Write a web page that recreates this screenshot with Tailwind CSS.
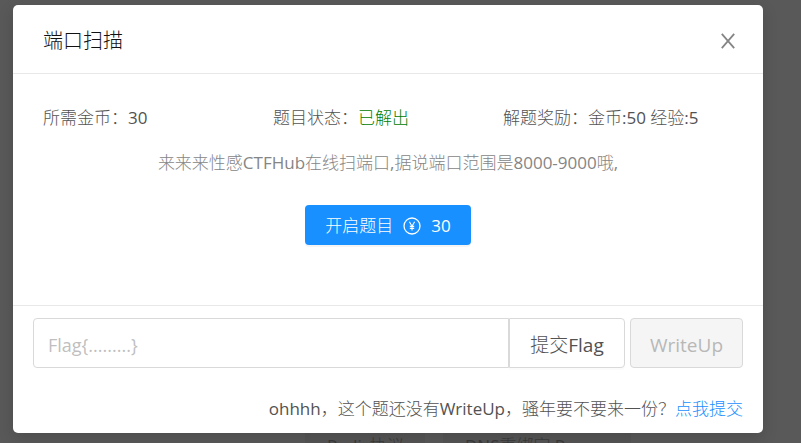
<!DOCTYPE html>
<html lang="zh-CN">
<head>
<meta charset="utf-8">
<meta name="viewport" content="width=device-width, initial-scale=1">
<title>端口扫描</title>
<script src="https://cdn.jsdelivr.net/npm/@tailwindcss/browser@4"></script>
</head>
<body class="relative min-h-screen overflow-hidden bg-[#595959] font-['Open_Sans','Noto_Sans_CJK_SC_Light','Noto_Sans_CJK_SC',sans-serif] text-[17px] leading-[26px] text-[#525252]">
  <!-- Page behind the dialog -->
  <div class="absolute inset-x-0 top-[425px] flex h-[18px] gap-[18px] overflow-hidden pl-[305px]" aria-hidden="true">
    <div class="h-[50px] w-[120px] shrink-0 bg-[#555555] px-[22px] pt-2 whitespace-nowrap text-[#3a3a3a]">Redis协议</div>
    <div class="h-[50px] w-[188px] shrink-0 bg-[#555555] px-[22px] pt-2 whitespace-nowrap text-[#3a3a3a]">DNS重绑定 R</div>
  </div>

  <main class="relative pt-[5px] pr-[38px] pb-[10px] pl-[13px]">
    <section role="dialog" aria-labelledby="title" class="rounded-[5px] bg-white shadow-[0_5px_15px_rgba(0,0,0,0.15)]">
      <header class="flex items-center justify-between border-b border-[#e8e8e8] pt-[22px] pr-[27px] pb-[18px] pl-[30px]">
        <h1 id="title" class="text-[20px] leading-7 text-[#111111]">端口扫描</h1>
        <button type="button" aria-label="关闭" class="text-[#858585]">
          <svg class="size-4" viewBox="0 0 16 16" fill="none" stroke="currentColor" stroke-width="1.8"><path d="M1.8 .8 14.2 15.2M14.2 .8 1.8 15.2"/></svg>
        </button>
      </header>

      <div class="px-[30px] pt-[31px] pb-[60px]">
        <div class="grid grid-cols-3">
          <div>所需金币：30</div>
          <div>题目状态：<span class="text-[#008000]">已解出</span></div>
          <div>解题奖励：金币:50 经验:5</div>
        </div>
        <p class="mt-[19px] text-center text-[#858585]">来来来性感CTFHub在线扫端口,据说端口范围是8000-9000哦,</p>
        <div class="mt-[29px] flex justify-center">
          <button type="button" class="flex h-10 items-center gap-[10px] rounded-[4px] bg-[#1890ff] px-5 pt-px text-white shadow-[0_2px_0_rgba(0,0,0,0.045)]">
            <span>开启题目</span>
            <svg class="size-[18px]" viewBox="0 0 18 18" fill="none" stroke="currentColor" stroke-width="1.3"><circle cx="9" cy="9" r="8"/><path d="M6.4 4.8 9 9.2l2.6-4.4M9 9v4.4M6.8 9.4h4.4M6.8 11.4h4.4" stroke-width="1.1"/></svg>
            <span>30</span>
          </button>
        </div>
      </div>

      <footer class="border-t border-[#e8e8e8] px-5 pt-3 pb-[11px]">
        <form class="flex text-[19px]">
          <label for="flag" class="sr-only">Flag</label>
          <input id="flag" type="text" placeholder="Flag{.........}" class="h-[50px] min-w-0 flex-1 rounded-l-[4px] border border-[#d9d9d9] px-[14px] pt-1 text-lg placeholder:text-[#bfbfbf]">
          <button type="button" class="h-[50px] w-[116px] rounded-r-[4px] border border-[#d9d9d9] bg-white pt-1 shadow-[0_2px_0_rgba(0,0,0,0.015)]">提交Flag</button>
          <button type="button" disabled class="ml-[5px] h-[50px] w-[113px] rounded-[4px] border border-[#d9d9d9] bg-[#f5f5f5] pt-1 text-[#b8b8b8]">WriteUp</button>
        </form>
        <p class="mt-7 text-right">ohhhh，这个题还没有WriteUp，骚年要不要来一份？<a href="#" class="text-[#1890ff]">点我提交</a></p>
      </footer>
    </section>
  </main>
</body>
</html>
